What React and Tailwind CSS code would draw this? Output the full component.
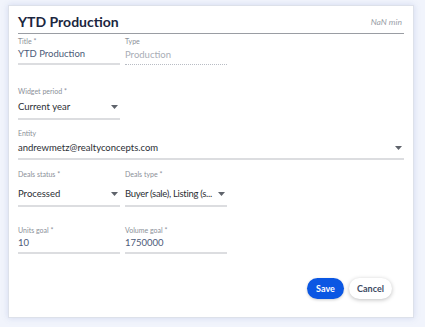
import React from 'react';

const font = { fontFamily: 'Lato, "Noto Sans", sans-serif' };

const Caret = () => (
  <svg width="7" height="4" viewBox="0 0 7 4" className="shrink-0 mr-[2px] ml-[2px]">
    <path d="M0 0h7L3.5 4z" fill="#5f636b" />
  </svg>
);

const Field = ({ label, value, width = 'w-[102px]', box = 'h-[20px]', gap = '', select, muted, dotted, tight }) => (
  <div className={`${width} flex flex-col`}>
    <span className="text-[7px] leading-[8px] text-[#8a8f98]">{label}</span>
    <div
      className={`flex items-center justify-between ${box} ${gap} ${
        dotted ? 'border-b border-dotted border-[#b8bcc4]' : 'border-b-2 border-[#dcdde0]'
      }`}
    >
      <span
        className={`min-w-0 whitespace-nowrap text-[9.5px] leading-[12px] ${tight ? 'tracking-[-0.3px]' : ''} ${
          muted ? 'text-[#a8adb6]' : select ? 'text-[#2b2e34]' : 'text-[#4b5a78]'
        }`}
      >
        {value}
      </span>
      {select && <Caret />}
    </div>
  </div>
);

export default function App() {
  return (
    <div className="w-[425px] h-[327px] bg-[#f1f4fc] pt-[5px] pl-[8px]" style={font}>
      <div className="w-[406px] h-[313px] bg-white border border-[#dde1ea] shadow-[0_0_6px_rgba(120,140,200,0.25)] px-[9px] pt-[6px] flex flex-col">
        <div className="flex items-center justify-between border-b border-[#9a9da3] h-[22px]">
          <h1 className="text-[14px] font-bold text-[#1b2640] leading-[18px] -mt-[2px]">YTD Production</h1>
          <span className="text-[8.5px] italic text-[#9aa0a8] mr-[2px]">NaN min</span>
        </div>

        <div className="flex gap-[5px] mt-[3px]">
          <Field label="Title *" value="YTD Production" />
          <Field label="Type" value="Production" muted dotted />
        </div>

        <div className="mt-[22px]">
          <Field label="Widget period *" value="Current year" box="h-[25px]" select />
        </div>

        <div className="mt-[9px]">
          <Field label="Entity" value="andrewmetz@realtyconcepts.com" width="w-full" box="h-[23px]" select />
        </div>

        <div className="flex gap-[5px] mt-[10px]">
          <Field label="Deals status *" value="Processed" box="h-[25px]" gap="mt-[4px]" select />
          <Field label="Deals type *" value="Buyer (sale), Listing (s..." box="h-[25px]" gap="mt-[4px]" select tight />
        </div>

        <div className="flex gap-[5px] mt-[19px]">
          <Field label="Units goal *" value="10" />
          <Field label="Volume goal *" value="1750000" />
        </div>

        <div className="flex justify-end gap-[5px] mt-[24px] mr-[12px]">
          <button className="h-[21px] w-[37px] rounded-full bg-[#0b57e3] text-white text-[9px] font-bold shadow-[0_1px_3px_rgba(0,0,0,0.2)]">
            Save
          </button>
          <button className="h-[21px] w-[43px] rounded-full bg-white text-[#3d4a63] text-[9px] font-bold shadow-[0_1px_4px_rgba(0,0,0,0.25)]">
            Cancel
          </button>
        </div>
      </div>
    </div>
  );
}
